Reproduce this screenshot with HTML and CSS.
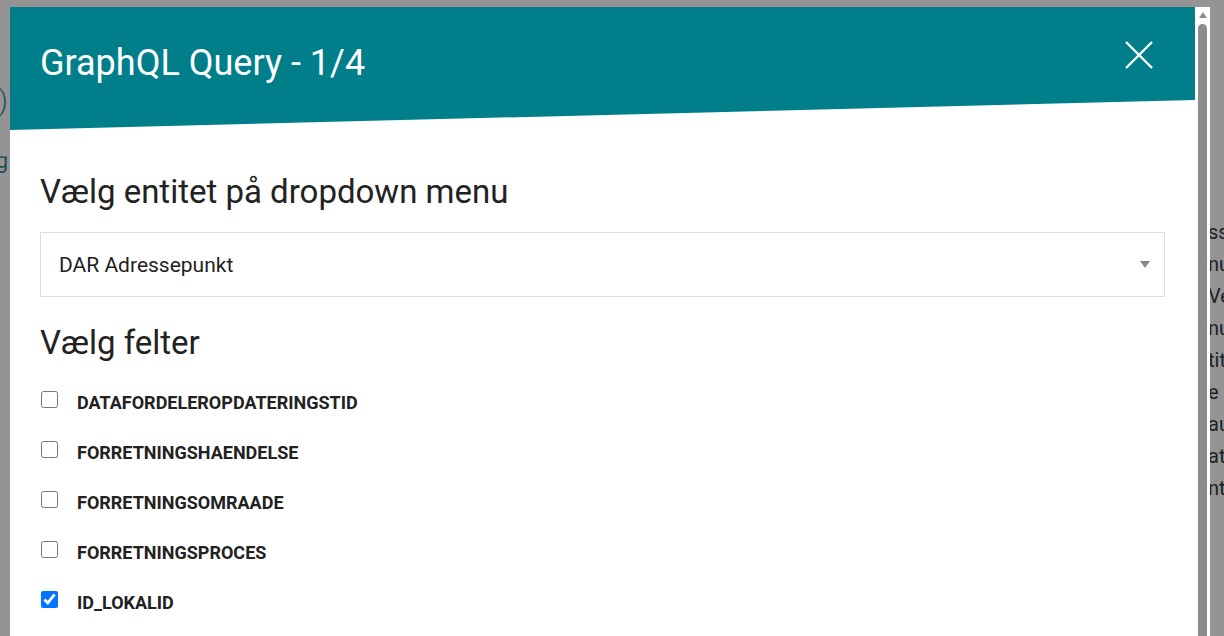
FILE: index.html
```html
<!DOCTYPE html>
<html lang="da">
<head>
<meta charset="utf-8">
<title>GraphQL Query</title>
<link rel="stylesheet" href="styles.css">
</head>
<body>
<div class="page">
  <div class="page-left">
    <div class="paren">(Adresse)</div>
    <div class="link">Søg</div>
  </div>
  <div class="page-right">
    <p>ss</p>
    <p>nu</p>
    <p>Ve</p>
    <p>nu</p>
    <p>tit</p>
    <p>e e</p>
    <p>au</p>
    <p>at</p>
    <p>nt</p>
  </div>
</div>

<div class="modal">
  <div class="modal-main">
    <div class="modal-header">
      <h1 class="modal-title">GraphQL Query - 1/4</h1>
      <svg class="close" width="28" height="28" viewBox="0 0 28 28" aria-label="Luk">
        <path d="M1 1 L27 27 M27 1 L1 27" stroke="#fff" stroke-width="2.4" fill="none"/>
      </svg>
    </div>
    <div class="modal-body">
      <h2 class="section-title first">Vælg entitet på dropdown menu</h2>
      <div class="select">
        <span class="select-value">DAR Adressepunkt</span>
        <span class="select-arrow"></span>
      </div>
      <h2 class="section-title second">Vælg felter</h2>
      <div class="fields">
        <label class="field"><input type="checkbox"><span>DATAFORDELEROPDATERINGSTID</span></label>
        <label class="field"><input type="checkbox"><span>FORRETNINGSHAENDELSE</span></label>
        <label class="field"><input type="checkbox"><span>FORRETNINGSOMRAADE</span></label>
        <label class="field"><input type="checkbox"><span>FORRETNINGSPROCES</span></label>
        <label class="field"><input type="checkbox" checked><span>ID_LOKALID</span></label>
      </div>
    </div>
  </div>
  <div class="scrollbar">
    <div class="scroll-up"></div>
    <div class="scroll-thumb"></div>
  </div>
</div>
</body>
</html>
```

FILE: styles.css
```css
* { box-sizing: border-box; }

html, body {
  margin: 0;
  padding: 0;
  width: 1224px;
  height: 636px;
  overflow: hidden;
}

body {
  background: #949494;
  font-family: Roboto, "Liberation Sans", sans-serif;
  color: #222;
}

.page {
  display: flex;
  height: 636px;
}

.page-left {
  flex: 0 0 8px;
  width: 8px;
  overflow: hidden;
  display: flex;
  flex-direction: column;
  align-items: flex-end;
  padding-top: 84px;
}

.paren {
  font-size: 28px;
  line-height: 34px;
  color: #1f4f56;
  white-space: nowrap;
  font-weight: 300;
}

.link {
  margin-top: 30px;
  font-size: 22px;
  line-height: 26px;
  color: #1f4f56;
  white-space: nowrap;
}

.page-right {
  flex: 0 0 auto;
  margin-left: 1200px;
  padding-top: 216px;
}

.page-right p {
  margin: 0;
  font-size: 20px;
  line-height: 32px;
  color: #1e1e1e;
  white-space: nowrap;
}

.modal {
  position: absolute;
  left: 10px;
  top: 7px;
  width: 1200px;
  height: 700px;
  background: #fff;
  display: flex;
}

.modal-main {
  width: 1185px;
}

.modal-header {
  height: 123px;
  background: #007f8b;
  clip-path: polygon(0 0, 100% 0, 100% 75.6%, 0 100%);
  display: flex;
  justify-content: space-between;
  align-items: flex-start;
  padding: 34px 42px 0 30px;
}

.modal-title {
  margin: 0;
  font-size: 36px;
  line-height: 44px;
  font-weight: 400;
  color: #fff;
}

.close {
  margin-top: 0;
}

.modal-body {
  padding: 42px 30px 0 30px;
}

.section-title {
  margin: 0;
  font-size: 33px;
  line-height: 40px;
  font-weight: 400;
  color: #222;
}

.select {
  margin-top: 20px;
  height: 65px;
  border: 1px solid #ddd;
  display: flex;
  align-items: center;
  justify-content: space-between;
  padding: 0 14px 0 18px;
}

.select-value {
  font-size: 21px;
  line-height: 24px;
  color: #222;
}

.select-arrow {
  width: 0;
  height: 0;
  border-left: 5.5px solid transparent;
  border-right: 5.5px solid transparent;
  border-top: 7px solid #888;
}

.section-title.second {
  margin-top: 26px;
}

.fields {
  margin-top: 15px;
  display: flex;
  flex-direction: column;
}

.field {
  height: 50px;
  display: flex;
  align-items: center;
  gap: 19px;
}

.field input {
  width: 17px;
  height: 17px;
  margin: 0 0 8px 1px;
}

.field span {
  font-size: 18px;
  line-height: 20px;
  font-weight: 700;
  color: #222;
}

.scrollbar {
  width: 15px;
  background: #fff;
  display: flex;
  flex-direction: column;
  align-items: center;
  padding-top: 5px;
}

.scroll-up {
  width: 0;
  height: 0;
  border-left: 4.5px solid transparent;
  border-right: 4.5px solid transparent;
  border-bottom: 6px solid #8c8c8c;
}

.scroll-thumb {
  margin-top: 6px;
  width: 9px;
  flex: 1;
  background: #8c8c8c;
  border-radius: 5px 5px 0 0;
}
```
